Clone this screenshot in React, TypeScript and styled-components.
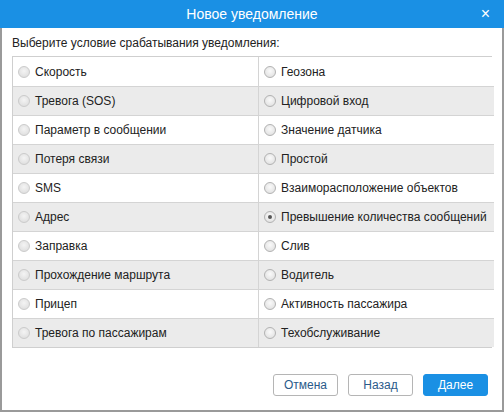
import React from "react";
import styled, { createGlobalStyle } from "styled-components";

const Global = createGlobalStyle`
  html, body { margin: 0; padding: 0; background: #fff; }
  body { font-family: "Liberation Sans", Arial, sans-serif; }
  * { box-sizing: border-box; }
`;

const Dialog = styled.div`
  width: 504px;
  height: 412px;
  border: 2px solid #9a9a9a;
  border-top: none;
  display: flex;
  flex-direction: column;
  background: #fff;
`;

const Header = styled.div`
  height: 28px;
  margin: 0 -2px;
  background: #1a90e4;
  color: #fff;
  font-size: 14px;
  display: flex;
  align-items: center;
  justify-content: center;
  position: relative;
`;

const Close = styled.span`
  position: absolute;
  right: 14px;
  top: 6px;
  font-size: 16px;
  line-height: 16px;
  color: #fff;
`;

const Body = styled.div`
  flex: 1;
  padding: 8px 10px 0 10px;
  display: flex;
  flex-direction: column;
`;

const Prompt = styled.div`
  font-size: 12px;
  color: #222;
  height: 20px;
  line-height: 14px;
`;

const Table = styled.div`
  display: grid;
  grid-template-columns: 245px 236px;
  border: 1px solid #cfcfcf;
`;

const Cell = styled.label<{ $alt: boolean; $right: boolean }>`
  height: 29px;
  display: flex;
  align-items: center;
  gap: 5px;
  padding-left: 5px;
  font-size: 12px;
  color: #222;
  background: ${(p) => (p.$alt ? "#ebebeb" : "#fff")};
  border-top: 1px solid #d4d4d4;
  border-left: ${(p) => (p.$right ? "1px solid #d4d4d4" : "none")};
  &:nth-child(-n + 2) { border-top: none; }
`;

const Radio = styled.span<{ $dim: boolean; $on: boolean }>`
  width: 12px;
  height: 12px;
  border-radius: 50%;
  border: 1px solid ${(p) => (p.$dim ? "#cbcbcb" : "#b2b2b2")};
  background: ${(p) =>
    p.$dim
      ? "radial-gradient(circle at 50% 40%, #f4f4f4, #dadada)"
      : "radial-gradient(circle at 50% 40%, #fafafa, #dcdcdc)"};
  display: flex;
  align-items: center;
  justify-content: center;
  flex-shrink: 0;
  &::after {
    content: "";
    width: 4px;
    height: 4px;
    border-radius: 50%;
    background: #555;
    display: ${(p) => (p.$on ? "block" : "none")};
  }
`;

const Footer = styled.div`
  display: flex;
  justify-content: flex-end;
  gap: 10px;
  padding: 0 4px 14px 0;
  margin-top: auto;
`;

const Button = styled.button<{ $primary?: boolean }>`
  width: 65px;
  height: 22px;
  border-radius: 3px;
  font-family: "Liberation Sans", Arial, sans-serif;
  font-size: 12px;
  border: 1px solid ${(p) => (p.$primary ? "#1a90e4" : "#b5b5b5")};
  background: ${(p) => (p.$primary ? "#1a90e4" : "#fff")};
  color: ${(p) => (p.$primary ? "#fff" : "#2a5a8a")};
  padding: 0;
`;

const left = [
  "Скорость",
  "Тревога (SOS)",
  "Параметр в сообщении",
  "Потеря связи",
  "SMS",
  "Адрес",
  "Заправка",
  "Прохождение маршрута",
  "Прицеп",
  "Тревога по пассажирам",
];

const right = [
  "Геозона",
  "Цифровой вход",
  "Значение датчика",
  "Простой",
  "Взаиморасположение объектов",
  "Превышение количества сообщений",
  "Слив",
  "Водитель",
  "Активность пассажира",
  "Техобслуживание",
];

export default function App() {
  const selected = "Превышение количества сообщений";
  return (
    <>
      <Global />
      <Dialog>
        <Header>
          Новое уведомление
          <Close>×</Close>
        </Header>
        <Body>
          <Prompt>Выберите условие срабатывания уведомления:</Prompt>
          <Table>
            {left.map((l, i) => (
              <React.Fragment key={l}>
                <Cell $alt={i % 2 === 1} $right={false}>
                  <Radio $dim={true} $on={false} />
                  {l}
                </Cell>
                <Cell $alt={i % 2 === 1} $right={true}>
                  <Radio $dim={false} $on={right[i] === selected} />
                  {right[i]}
                </Cell>
              </React.Fragment>
            ))}
          </Table>
          <Footer>
            <Button>Отмена</Button>
            <Button>Назад</Button>
            <Button $primary>Далее</Button>
          </Footer>
        </Body>
      </Dialog>
    </>
  );
}
